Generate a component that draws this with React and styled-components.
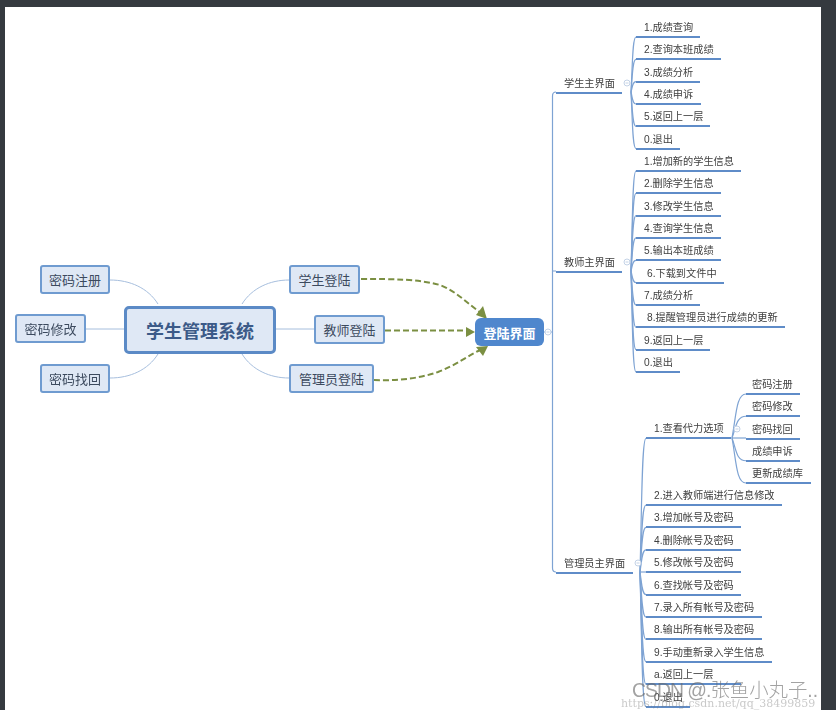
import React from "react";
import styled, { createGlobalStyle } from "styled-components";

const GlobalStyle = createGlobalStyle`
  html, body { margin: 0; padding: 0; background: #353a3f; }
  body { font-family: "Liberation Sans", "Noto Sans CJK SC", sans-serif; }
`;

const CJK = `"Liberation Sans", "Noto Sans CJK SC", sans-serif`;
const OX = 5;
const OY = 7;

const Page = styled.div`
  width: 836px;
  height: 710px;
  box-sizing: border-box;
  padding: 7px 15px 0 5px;
  background: #353a3f;
  overflow: hidden;
`;
const Sheet = styled.main`
  position: relative;
  height: 100%;
  background: #fff;
  overflow: hidden;
`;
const Diagram = styled.div`
  position: absolute;
  inset: 0;
  filter: blur(0.45px);
`;
const Wires = styled.svg`
  position: absolute;
  left: 0;
  top: 0;
`;
const Topic = styled.div`
  position: absolute;
  left: ${(p) => p.$x - OX}px;
  top: ${(p) => p.$y - OY}px;
  width: ${(p) => p.$w}px;
  height: 29px;
  box-sizing: border-box;
  display: flex;
  align-items: center;
  justify-content: center;
  background: #dfe8f5;
  border: 2px solid #6f9bd0;
  border-radius: 3px;
  color: #3c4a5e;
  font: 13px ${CJK};
  white-space: nowrap;
`;
const RootTopic = styled(Topic)`
  height: 48px;
  border: 3px solid #5b8ac6;
  border-radius: 5px;
  color: #3c5a88;
  font-size: 18px;
  font-weight: 700;
`;
const HubTopic = styled(Topic)`
  height: 28px;
  background: #4f87cd;
  border: none;
  border-radius: 6px;
  color: #fff;
  font-weight: 700;
`;
const LeafList = styled.ul`
  position: absolute;
  left: ${(p) => p.$x - OX}px;
  top: ${(p) => p.$top - OY}px;
  margin: 0;
  padding: 0;
  list-style: none;
  display: flex;
  flex-direction: column;
  align-items: flex-start;
`;
const Leaf = styled.li`
  width: ${(p) => p.$w}px;
  height: ${(p) => p.$h}px;
  box-sizing: border-box;
  display: flex;
  align-items: flex-end;
  padding-left: ${(p) => p.$pad}px;
  border-bottom: 2px solid #5f8cc8;
  color: #404040;
  font: 10.2px/16px ${CJK};
  white-space: nowrap;
`;
const Watermark = styled.div`
  position: absolute;
  left: ${632 - OX}px;
  top: ${677 - OY}px;
  color: rgba(105, 105, 105, 0.62);
  font: 300 19.4px/26px ${CJK};
  white-space: nowrap;
`;
const WatermarkLatin = styled.span`
  letter-spacing: -1px;
`;
const Url = styled.div`
  position: absolute;
  left: ${621 - OX}px;
  top: ${697 - OY}px;
  color: rgba(120, 120, 120, 0.4);
  font: 11px/14px "DejaVu Serif", serif;
  white-space: nowrap;
`;

const panels = [
  { key: "student", x: 636, top: 15.67, pitch: 22.33, px: 631, py: 92, items: [
    ["1.成绩查询", 64], ["2.查询本班成绩", 85], ["3.成绩分析", 64],
    ["4.成绩申诉", 65], ["5.返回上一层", 74], ["0.退出", 44],
  ] },
  { key: "teacher", x: 636, top: 149.65, pitch: 22.33, px: 631, py: 271, items: [
    ["1.增加新的学生信息", 105], ["2.删除学生信息", 85], ["3.修改学生信息", 85],
    ["4.查询学生信息", 85], ["5.输出本班成绩", 85], ["6.下载到文件中", 88, 11],
    ["7.成绩分析", 64], ["8.提醒管理员进行成绩的更新", 149, 11], ["9.返回上一层", 74],
    ["0.退出", 44],
  ] },
  { key: "check", x: 646, top: 417, pitch: 22.33, px: 640, py: 572, items: [
    ["1.查看代力选项", 85],
  ] },
  { key: "admin", x: 646, top: 483.6, pitch: 22.4, px: 640, py: 572, items: [
    ["2.进入教师端进行信息修改", 136], ["3.增加帐号及密码", 95], ["4.删除帐号及密码", 95],
    ["5.修改帐号及密码", 95], ["6.查找帐号及密码", 95], ["7.录入所有帐号及密码", 116],
    ["8.输出所有帐号及密码", 116], ["9.手动重新录入学生信息", 126], ["a.返回上一层", 95],
    ["0.退出", 44],
  ] },
  { key: "todo", x: 746, top: 372.75, pitch: 22.25, px: 732, py: 438, pad: 6, items: [
    ["密码注册", 54], ["密码修改", 54], ["密码找回", 54], ["成绩申诉", 54], ["更新成绩库", 65],
  ] },
];
const mainLabels = [
  ["学生主界面", 73.5, 66],
  ["教师主界面", 252.5, 66],
  ["管理员主界面", 553.5, 77],
];
const knobs = [[548, 332], [627, 83], [627, 262], [638, 563], [737, 429]];
const sideCurves = [
  "M158 304 C148 288 130 280 110 280",
  "M158 354 C148 370 130 378 110 378",
  "M242 304 C252 288 270 280 289 280",
  "M242 354 C252 370 270 378 289 378",
  "M86 329 H124",
  "M276 329 H314",
];
const flows = [
  { d: "M361 279 C395 279 418 279 440 285 C456 291 468 304 481 313", head: "487,319 476,315 483,306" },
  { d: "M385 330.5 H466", head: "475,332 466,327 466,337" },
  { d: "M374 380 C395 381 418 379 438 372 C456 365 468 356 480 350", head: "488,346 483,356 476,347" },
];

function branch(px, py, ex, uy) {
  const dy = uy - py;
  if (Math.abs(dy) < 2) return `M${px} ${py} H${ex}`;
  const w = ex - px;
  const xm = px + 0.3 * w;
  return `M${px} ${py} C${xm} ${py + dy * 0.5} ${xm} ${uy} ${ex} ${uy}`;
}

export default function App() {
  return (
    <Page>
      <GlobalStyle />
      <Sheet>
        <Diagram>
          <Wires width="816" height="703" viewBox={`${OX} ${OY} 816 703`} fill="none">
            {sideCurves.map((d) => (
              <path key={d} d={d} stroke="#a6bedd" strokeWidth="1" />
            ))}
            <path
              d="M544 332 H552.5 M556 92 Q552.5 92 552.5 96 V568 Q552.5 572 556 572 M552.5 271 H556"
              stroke="#7ea3d3"
              strokeWidth="1.2"
            />
            {panels.flatMap((g) =>
              g.items.map((it, i) => {
                const uy = g.top + g.pitch * (i + 1) - 1;
                return (
                  <path
                    key={`${g.key}-${i}`}
                    d={branch(g.px, g.py, g.x, uy)}
                    stroke="#7ea3d3"
                    strokeWidth="1.2"
                  />
                );
              })
            )}
            {flows.map((f) => (
              <g key={f.head}>
                <path d={f.d} stroke="#7b8f42" strokeWidth="2" strokeDasharray="6 3" />
                <polygon points={f.head} fill="#7b8f42" />
              </g>
            ))}
            {knobs.map(([x, y]) => (
              <g key={`${x}-${y}`} stroke="#c3d2e6" strokeWidth="1">
                <circle cx={x} cy={y} r="3" fill="#fff" />
                <path d={`M${x - 1.5} ${y} H${x + 1.5}`} />
              </g>
            ))}
          </Wires>

          <RootTopic $x={124} $y={306} $w={152}>学生管理系统</RootTopic>
          <Topic $x={40} $y={265} $w={70}>密码注册</Topic>
          <Topic $x={15} $y={314} $w={71}>密码修改</Topic>
          <Topic $x={40} $y={364} $w={70}>密码找回</Topic>
          <Topic $x={289} $y={265} $w={71}>学生登陆</Topic>
          <Topic $x={314} $y={315} $w={71}>教师登陆</Topic>
          <Topic $x={289} $y={364} $w={85}>管理员登陆</Topic>
          <HubTopic $x={475} $y={318} $w={69}>登陆界面</HubTopic>

          {mainLabels.map(([t, top, w]) => (
            <LeafList key={t} $x={556} $top={top}>
              <Leaf $w={w} $h={20} $pad={8}>{t}</Leaf>
            </LeafList>
          ))}
          {panels.map((g) => (
            <LeafList key={g.key} $x={g.x} $top={g.top}>
              {g.items.map(([t, w, pad]) => (
                <Leaf key={t} $w={w} $h={g.pitch} $pad={pad ?? g.pad ?? 8}>{t}</Leaf>
              ))}
            </LeafList>
          ))}
        </Diagram>
        <Watermark><WatermarkLatin>CSDN @.</WatermarkLatin>张鱼小丸子..</Watermark>
        <Url>https://blog.csdn.net/qq_38499859</Url>
      </Sheet>
    </Page>
  );
}
